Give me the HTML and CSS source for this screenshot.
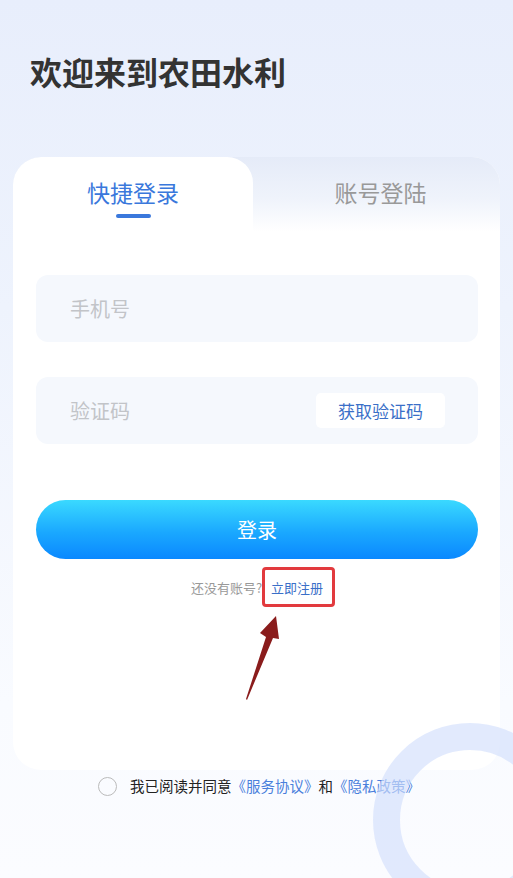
FILE: index.html
```html
<!DOCTYPE html>
<html lang="zh-CN">
<head>
<meta charset="utf-8">
<title>登录</title>
<link rel="stylesheet" href="styles.css">
</head>
<body>
<div class="page">
  <h1 class="title">欢迎来到农田水利</h1>
  <div class="card">
    <div class="tabs">
      <div class="tab active">快捷登录<span class="bar"></span></div>
      <div class="tab other">账号登陆</div>
    </div>
    <div class="form">
      <div class="field"><span class="ph">手机号</span></div>
      <div class="field gap"><span class="ph">验证码</span><span class="code-btn">获取验证码</span></div>
      <div class="login-btn">登录</div>
      <div class="register">还没有账号?<span class="reg-link">立即注册</span></div>
    </div>
  </div>
  <div class="agree"><span class="radio"></span><span>我已阅读并同意</span><span class="link">《服务协议》</span><span>和</span><span class="link">《隐私政策》</span></div>
  <div class="ring"></div>
  <svg class="arrow" width="60" height="100" viewBox="0 0 60 100">
    <path d="M14 89 L34 27 L28 23 L44 6 L47 29 L41 28 L15 90 Z" fill="#8a1c1c"/>
  </svg>
</div>
</body>
</html>
```
FILE: styles.css
```css
html, body {
  margin: 0;
  padding: 0;
  overflow: hidden;
}
body {
  font-family: "Noto Sans CJK SC", "Noto Sans", sans-serif;
}
.page {
  position: relative;
  width: 513px;
  height: 878px;
  overflow: hidden;
  box-sizing: border-box;
  padding: 51px 13px 0;
  background: linear-gradient(180deg, #e8eefc 0%, #eef3fd 35%, #f9fbff 80%, #fbfcff 100%);
}
.title {
  margin: 0 0 0 17px;
  font-size: 32px;
  line-height: 40px;
  font-weight: 700;
  color: #333;
}
.card {
  position: relative;
  margin-top: 66px;
  height: 613px;
  background: #fff;
  border-radius: 28px;
  overflow: hidden;
}
.tabs {
  display: flex;
  height: 75px;
  background: linear-gradient(180deg, #e5ebf8 0%, #eff3fb 55%, #ffffff 100%);
}
.tab {
  position: relative;
  display: flex;
  justify-content: center;
  padding-top: 19px;
  box-sizing: border-box;
  font-size: 23px;
  line-height: 32px;
  color: #999;
  flex: 1;
}
.tab.other {
  padding-left: 8px;
}
.tab.active {
  flex: 0 0 240px;
  background: #fff;
  border-radius: 28px 26px 0 0;
  color: #3a78dc;
}
.bar {
  position: absolute;
  left: 103px;
  top: 57px;
  width: 35px;
  height: 4px;
  border-radius: 2px;
  background: #3a78dc;
}
.form {
  padding: 43px 22px 0 23px;
}
.field {
  height: 67px;
  border-radius: 12px;
  background: #f5f8fd;
  display: flex;
  align-items: center;
  justify-content: space-between;
  padding: 0 33px 0 34px;
}
.field.gap {
  margin-top: 35px;
}
.ph {
  font-size: 20px;
  color: #c2c4c8;
}
.code-btn {
  width: 129px;
  height: 35px;
  border-radius: 5px;
  background: #fff;
  color: #3a6fc8;
  font-size: 17px;
  display: flex;
  align-items: center;
  justify-content: center;
}
.login-btn {
  margin-top: 56px;
  height: 59px;
  border-radius: 30px;
  background: linear-gradient(180deg, #3ad9ff 0%, #1aa8ff 55%, #0a88ff 100%);
  color: #fff;
  font-size: 20px;
  display: flex;
  align-items: center;
  justify-content: center;
}
.register {
  margin-top: 19px;
  text-align: center;
  font-size: 13px;
  line-height: 20px;
  color: #999;
}
.reg-link {
  position: relative;
  margin-left: 9px;
  color: #3a6fc8;
}
.reg-link::after {
  content: "";
  position: absolute;
  left: -9px;
  right: -12px;
  top: -11px;
  bottom: -10px;
  border: 3px solid #e23a3e;
  border-radius: 4px;
}
.agree {
  margin-top: 6px;
  display: flex;
  align-items: center;
  padding-left: 85px;
  font-size: 14.5px;
  line-height: 20px;
  color: #222;
}
.radio {
  width: 17px;
  height: 17px;
  border: 1px solid #bbb;
  border-radius: 50%;
  margin-right: 13px;
}
.link {
  color: #4a80dc;
}
.ring {
  position: absolute;
  left: 373px;
  top: 723px;
  width: 140px;
  height: 140px;
  border: 27px solid rgba(210, 223, 252, 0.65);
  border-radius: 50%;
}
.arrow {
  position: absolute;
  left: 232px;
  top: 610px;
}
```
